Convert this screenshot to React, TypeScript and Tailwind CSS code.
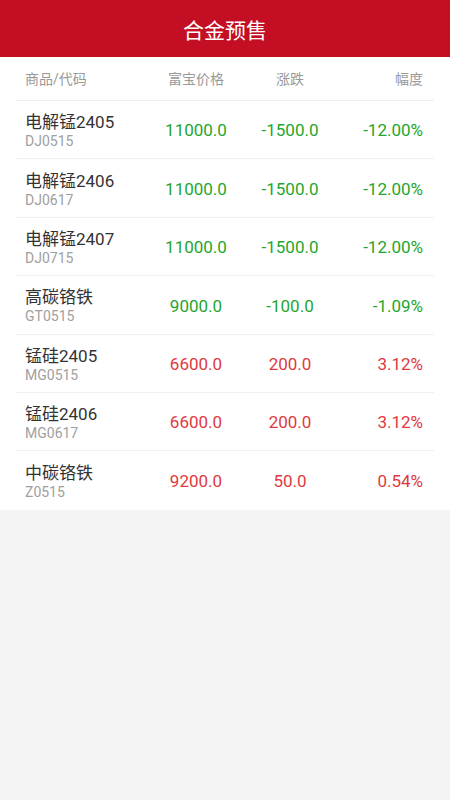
const rows = [
  { name: "电解锰2405", code: "DJ0515", price: "11000.0", change: "-1500.0", pct: "-12.00%" },
  { name: "电解锰2406", code: "DJ0617", price: "11000.0", change: "-1500.0", pct: "-12.00%" },
  { name: "电解锰2407", code: "DJ0715", price: "11000.0", change: "-1500.0", pct: "-12.00%" },
  { name: "高碳铬铁", code: "GT0515", price: "9000.0", change: "-100.0", pct: "-1.09%" },
  { name: "锰硅2405", code: "MG0515", price: "6600.0", change: "200.0", pct: "3.12%" },
  { name: "锰硅2406", code: "MG0617", price: "6600.0", change: "200.0", pct: "3.12%" },
  { name: "中碳铬铁", code: "Z0515", price: "9200.0", change: "50.0", pct: "0.54%" },
];

const App = () => {
  return (
    <div
      className="min-h-[800px] bg-[#f4f4f4]"
      style={{ fontFamily: 'Roboto, "Noto Sans CJK SC", sans-serif' }}
    >
      <div className="h-[57px] bg-[#c30e24] flex items-center justify-center pt-[6px]">
        <span className="text-white text-[21px]">合金预售</span>
      </div>
      <div className="bg-white px-[16px]">
        <div className="flex items-center h-[44px] pt-[1px] border-b border-[#eeeeee] text-[14px] text-[#999999]">
          <div className="w-[135px] pl-[9px]">商品/代码</div>
          <div className="w-[90px] text-center">富宝价格</div>
          <div className="w-[98px] text-center">涨跌</div>
          <div className="flex-1 text-right pr-[11px]">幅度</div>
        </div>
        {rows.map((r, i) => {
          const up = !r.change.startsWith("-");
          const color = up ? "text-[#e0393e]" : "text-[#1fa62d]";
          return (
            <div
              key={r.code}
              className={`flex items-center h-[58.4px] pt-[3px] ${i < rows.length - 1 ? "border-b border-[#f0f0f0]" : ""}`}
            >
              <div className="w-[135px] pl-[9px] flex flex-col leading-none">
                <span className="text-[17px] text-[#333333]">{r.name}</span>
                <span className="text-[14px] text-[#a0a0a0] mt-[3px]">{r.code}</span>
              </div>
              <div className={`w-[90px] text-center text-[17px] ${color}`}>{r.price}</div>
              <div className={`w-[98px] text-center text-[17px] ${color}`}>{r.change}</div>
              <div className={`flex-1 text-right pr-[11px] text-[17px] ${color}`}>{r.pct}</div>
            </div>
          );
        })}
      </div>
    </div>
  );
};

export default App;
